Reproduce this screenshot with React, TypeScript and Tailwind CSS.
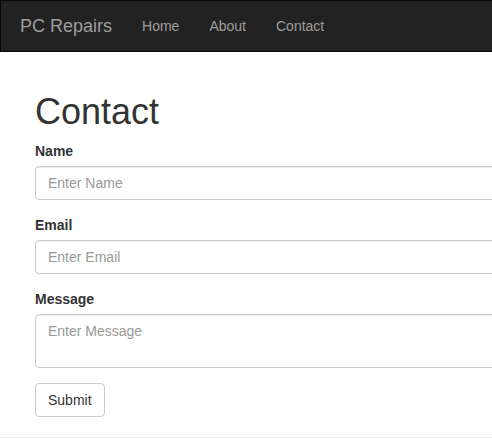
import React from 'react';

const navLinks = ['Home', 'About', 'Contact'];

const inputClass =
  'block w-[720px] h-[34px] px-3 py-1.5 text-sm leading-5 text-[#555] bg-white border border-[#ccc] rounded shadow-[inset_0_1px_1px_rgba(0,0,0,0.075)] placeholder:text-[#999] outline-none';

const App: React.FC = () => {
  return (
    <div
      className="h-[440px] w-full overflow-hidden bg-white text-sm leading-5 text-[#333]"
      style={{ fontFamily: '"Liberation Sans", Arial, Helvetica, sans-serif' }}
    >
      <nav className="w-[900px] h-[52px] bg-[#222] border border-[#080808] flex items-start pl-[4px]">
        <a className="block px-[15px] py-[15px] text-[18px] leading-5 text-[#9d9d9d]">PC Repairs</a>
        <ul className="flex">
          {navLinks.map((link) => (
            <li key={link}>
              <a className="block px-[15px] py-[15px] text-sm leading-5 text-[#9d9d9d]">{link}</a>
            </li>
          ))}
        </ul>
      </nav>

      <div className="pt-5 pl-[35px]">
        <h1 className="mt-5 mb-2.5 text-[36px] leading-[39px] font-normal">Contact</h1>
        <form onSubmit={(e) => e.preventDefault()}>
          <div className="mb-[15px]">
            <label className="inline-block mb-[5px] font-bold">Name</label>
            <input type="text" placeholder="Enter Name" className={inputClass} />
          </div>
          <div className="mb-[15px]">
            <label className="inline-block mb-[5px] font-bold">Email</label>
            <input type="email" placeholder="Enter Email" className={inputClass} />
          </div>
          <div className="mb-[15px]">
            <label className="inline-block mb-[5px] font-bold">Message</label>
            <textarea
              rows={2}
              placeholder="Enter Message"
              className="block w-[720px] h-[54px] px-3 py-1.5 text-sm leading-5 text-[#555] bg-white border border-[#ccc] rounded shadow-[inset_0_1px_1px_rgba(0,0,0,0.075)] placeholder:text-[#999] outline-none resize-none"
            />
          </div>
          <button
            type="submit"
            className="h-[34px] px-3 py-1.5 text-sm leading-5 text-[#333] bg-white border border-[#ccc] rounded"
          >
            Submit
          </button>
        </form>
      </div>
      <hr className="mt-5 w-[900px] border-0 border-t border-[#eee]" />
    </div>
  );
};

export default App;
